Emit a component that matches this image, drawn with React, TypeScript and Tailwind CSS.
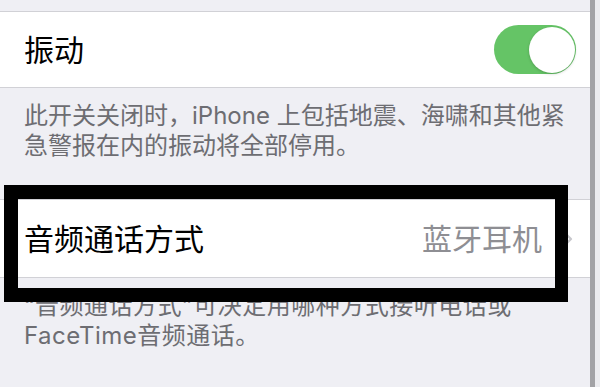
import React from "react";

const font = { fontFamily: '"Inter", "Noto Sans CJK SC", sans-serif' };

export default function App() {
  return (
    <div
      className="relative flex h-[387px] w-[600px] overflow-hidden bg-[#efeff4]"
      style={font}
    >
      <div className="flex w-[590px] flex-col">
        <div className="h-[11px]" />
        {/* Vibration row */}
        <div className="flex h-[77px] items-center justify-between border-y border-[#d1d1d6] bg-white pl-[24px] pr-[14px]">
          <span className="text-[30px] leading-none text-black">振动</span>
          <div className="relative h-[49px] w-[82px] rounded-full bg-[#65c466]">
            <div className="absolute right-[1px] top-[1.5px] h-[46px] w-[46px] rounded-full bg-white shadow-[0_1px_3px_rgba(0,0,0,0.2)]" />
          </div>
        </div>
        <div className="pl-[24px] pr-[20px] pt-[13px] text-[24px] leading-[30px] text-[#6d6d72]">
          此开关关闭时，iPhone 上包括地震、海啸和其他紧急警报在内的振动将全部停用。
        </div>
        <div className="h-[38px]" />
        {/* Audio call row */}
        <div className="flex h-[79px] items-center border-y border-[#d1d1d6] bg-white pl-[24px] pr-[17px]">
          <span className="text-[30px] leading-none text-black">音频通话方式</span>
          <span className="ml-auto text-[30px] leading-none text-[#8e8e93]">蓝牙耳机</span>
          <svg
            className="ml-[22px]"
            width="9"
            height="14"
            viewBox="0 0 9 14"
            fill="none"
          >
            <path
              d="M1.5 1.5L7 7l-5.5 5.5"
              stroke="#c7c7cc"
              strokeWidth="2.2"
              strokeLinecap="round"
              strokeLinejoin="round"
            />
          </svg>
        </div>
        <div className="pl-[24px] pr-[20px] pt-[13px] text-[24px] leading-[30px] tracking-[0.5px] text-[#6d6d72]">
          “音频通话方式”可决定用哪种方式接听电话或 FaceTime音频通话。
        </div>
      </div>
      <div className="w-[5px] bg-[#a3a3a6]" />
      <div className="w-[5px] bg-[#ececef]" />

      {/* annotation box */}
      <div className="absolute left-[4px] top-[185px] h-[117px] w-[564px] border-b-[14px] border-l-[14px] border-r-[13px] border-t-[14px] border-black" />
    </div>
  );
}
